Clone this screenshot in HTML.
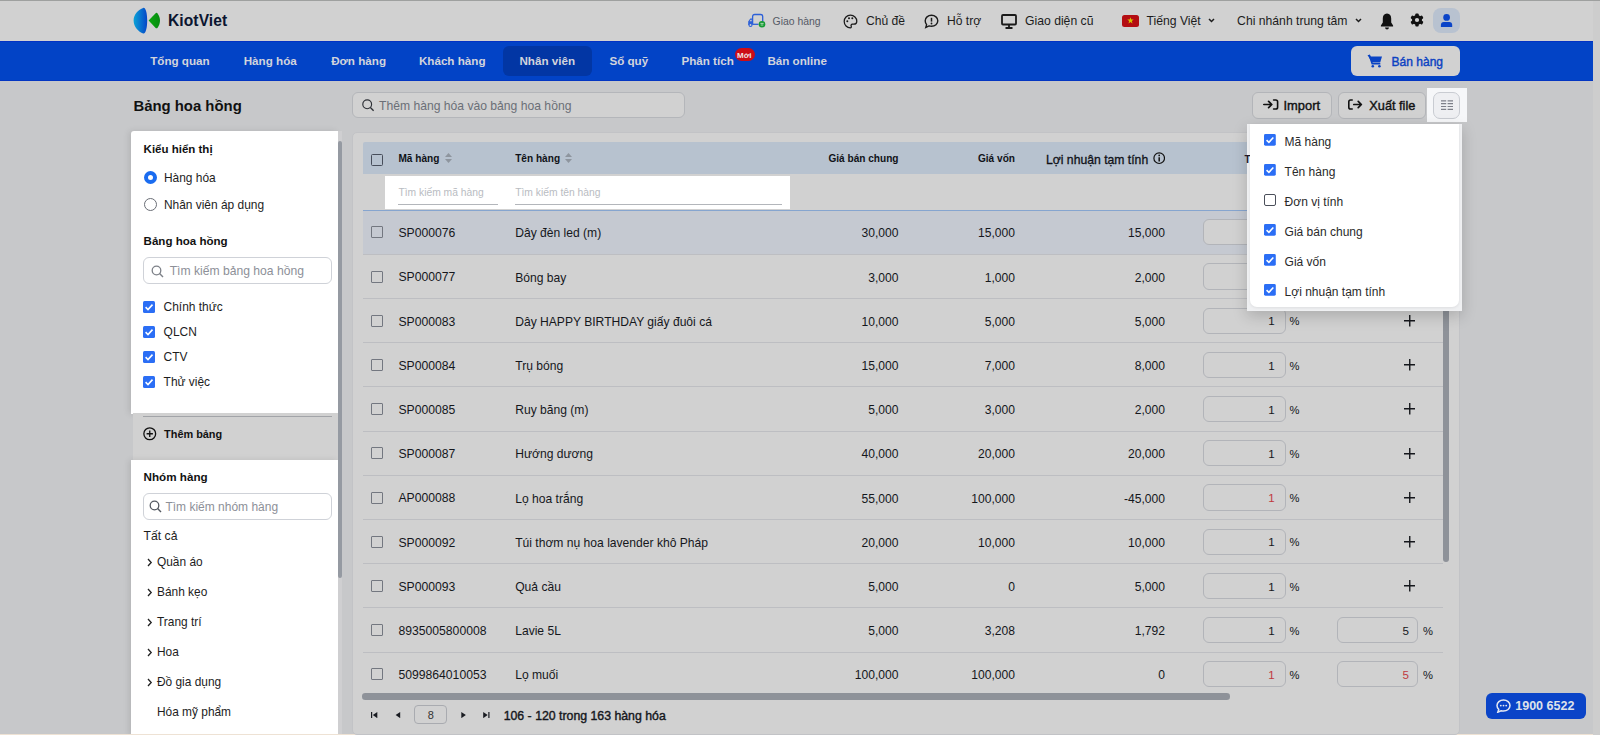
<!DOCTYPE html><html><head><meta charset="utf-8"><style>
html,body{margin:0;padding:0}
body{width:1600px;height:735px;position:relative;overflow:hidden;background:#c7c8ca;font-family:"Liberation Sans",sans-serif}
.t{position:absolute;line-height:1;white-space:nowrap}
.b{position:absolute;box-sizing:border-box}
</style></head><body>
<div class="b" style="left:0.00px;top:0.00px;width:1600.00px;height:41.00px;background:#d1d1d1"></div>
<div class="b" style="left:1593.00px;top:0.00px;width:7.00px;height:735.00px;background:#cdcdcd"></div>
<div class="b" style="left:0.00px;top:0.00px;width:1600.00px;height:1.20px;background:#9ea09f"></div>
<svg class="b" style="left:132.00px;top:7.00px;" width="30.00" height="27.00" viewBox="0 0 30 27"><defs><linearGradient id="lg1" x1="0" y1="0" x2="1" y2="0"><stop offset="0" stop-color="#0aa2d6"/><stop offset="1" stop-color="#0546c8"/></linearGradient><linearGradient id="lg2" x1="0" y1="0" x2="1" y2="0"><stop offset="0" stop-color="#0aa80e"/><stop offset="1" stop-color="#078a10"/></linearGradient></defs>
<path d="M11.2 0.9 C13.6 0.2 15.2 6 15.2 13.6 C15.2 21 13.7 27.2 11.2 26.5 C6.5 25 1.6 20 1.6 13.6 C1.6 7.2 6.5 2.2 11.2 0.9 Z" fill="url(#lg1)"/>
<path d="M16.6 13.4 L23.4 6.4 C24.1 5.6 25 5.6 25.6 6.4 C27.2 8.6 28 11 28 13.5 C28 16 27.2 18.4 25.6 20.7 C25 21.5 24.1 21.5 23.4 20.7 Z" fill="url(#lg2)"/></svg>
<div class="t" style="left:168.00px;top:12.54px;font-size:15.60px;font-weight:700;color:#0b1530;letter-spacing:0.080px;">KiotViet</div>
<svg class="b" style="left:747.00px;top:13.00px;" width="19.00" height="16.00" viewBox="0 0 19 16"><path d="M5.6 11.2 V3.6 C5.6 2.3 6.4 1.5 7.7 1.5 H13.6 C14.9 1.5 15.7 2.3 15.7 3.6 V8.5" fill="none" stroke="#2b5fd8" stroke-width="1.3"/>
<path d="M1.2 8.4 L3.3 5.6 H5.6 V11.9 H1.2 Z" fill="#2b5fd8"/><path d="M2.6 8.2 L3.7 6.8 H4.6 V8.2 Z" fill="#d1d1d1"/><path d="M5.6 11.3 H11.5" stroke="#2b5fd8" stroke-width="1.3"/>
<circle cx="3.5" cy="12" r="1.5" fill="#d1d1d1" stroke="#2b5fd8" stroke-width="1.1"/>
<circle cx="15" cy="11.2" r="3.3" fill="#159a33"/><path d="M13.4 10.4 H16.6 M13.7 12 H16.3" stroke="#cfe9d3" stroke-width="0.8"/></svg>
<div class="t" style="left:772.60px;top:17.16px;font-size:10.40px;font-weight:400;color:#555a66;">Giao hàng</div>
<svg class="b" style="left:843.00px;top:14.00px;" width="15.00" height="15.00" viewBox="0 0 15 15"><path d="M7.5 1.2 C3.8 1.2 1.2 4 1.2 7.5 C1.2 11 4 13.8 7.3 13.8 C8.3 13.8 8.6 13 8.2 12.2 C7.7 11.2 8.3 10.2 9.4 10.2 H10.8 C12.6 10.2 13.8 9 13.8 7.2 C13.8 3.8 11 1.2 7.5 1.2 Z" fill="none" stroke="#1a1a1a" stroke-width="1.25"/>
<circle cx="4.3" cy="7.3" r="1" fill="#1a1a1a"/><circle cx="6" cy="4.3" r="1" fill="#1a1a1a"/><circle cx="9.3" cy="4.3" r="1" fill="#1a1a1a"/></svg>
<div class="t" style="left:866.00px;top:15.41px;font-size:12.10px;font-weight:400;color:#1c1c1c;">Chủ đề</div>
<svg class="b" style="left:924.00px;top:14.00px;" width="15.00" height="15.00" viewBox="0 0 15 15"><path d="M7.5 1.3 C11 1.3 13.8 3.7 13.8 6.8 C13.8 9.9 11 12.3 7.5 12.3 C6.6 12.3 5.8 12.2 5 11.9 L1.8 13.4 L2.6 10.6 C1.7 9.6 1.2 8.3 1.2 6.8 C1.2 3.7 4 1.3 7.5 1.3 Z" fill="none" stroke="#1a1a1a" stroke-width="1.4"/>
<path d="M7.5 3.8 V7.6" stroke="#1a1a1a" stroke-width="1.5"/><circle cx="7.5" cy="9.5" r="0.9" fill="#1a1a1a"/></svg>
<div class="t" style="left:947.00px;top:15.41px;font-size:12.10px;font-weight:400;color:#1c1c1c;">Hỗ trợ</div>
<svg class="b" style="left:1001.00px;top:14.00px;" width="16.00" height="15.00" viewBox="0 0 16 15"><rect x="1" y="1" width="14" height="9.5" rx="1" fill="none" stroke="#1a1a1a" stroke-width="1.8"/><path d="M8 10.5 V13.5 M4.5 14 H11.5" stroke="#1a1a1a" stroke-width="1.8"/></svg>
<div class="t" style="left:1025.00px;top:15.33px;font-size:12.20px;font-weight:400;color:#1c1c1c;">Giao diện cũ</div>
<div class="b" style="left:1122.40px;top:15.40px;width:16.40px;height:11.20px;background:#b40d12;border-radius:2.5px"></div>
<svg class="b" style="left:1127.00px;top:17.20px;" width="7.00" height="7.00" viewBox="0 0 7 7"><path d="M3.5 0.3 L4.3 2.6 H6.7 L4.8 4 L5.5 6.4 L3.5 5 L1.5 6.4 L2.2 4 L0.3 2.6 H2.7 Z" fill="#d8c400"/></svg>
<div class="t" style="left:1146.50px;top:15.33px;font-size:12.20px;font-weight:400;color:#1c1c1c;">Tiếng Việt</div>
<svg class="b" style="left:1207.50px;top:18.00px;" width="7.00" height="5.00" viewBox="0 0 7 5"><path d="M1 1 L3.5 3.5 L6 1" fill="none" stroke="#1c1c1c" stroke-width="1.5"/></svg>
<div class="t" style="left:1237.10px;top:15.33px;font-size:12.20px;font-weight:400;color:#1c1c1c;">Chi nhánh trung tâm</div>
<svg class="b" style="left:1355.00px;top:18.00px;" width="7.00" height="5.00" viewBox="0 0 7 5"><path d="M1 1 L3.5 3.5 L6 1" fill="none" stroke="#1c1c1c" stroke-width="1.5"/></svg>
<svg class="b" style="left:1379.50px;top:12.50px;" width="14.00" height="17.00" viewBox="0 0 14 17"><path d="M7 0.6 C9.9 0.6 11.2 2.8 11.2 5.6 V9.5 L13.1 12.4 V13.5 H0.9 V12.4 L2.8 9.5 V5.6 C2.8 2.8 4.1 0.6 7 0.6 Z" fill="#111"/><path d="M5 14.4 H9 C8.8 15.7 8 16.4 7 16.4 C6 16.4 5.2 15.7 5 14.4 Z" fill="#111"/></svg>
<svg class="b" style="left:1409.50px;top:13.20px;" width="14.00" height="14.00" viewBox="0 0 14 14"><g transform="translate(7 7)"><circle r="5" fill="#111"/><rect x="-1.7" y="-6.6" width="3.4" height="13.2" rx="1" fill="#111"/><rect x="-1.7" y="-6.6" width="3.4" height="13.2" rx="1" fill="#111" transform="rotate(60)"/><rect x="-1.7" y="-6.6" width="3.4" height="13.2" rx="1" fill="#111" transform="rotate(120)"/><circle r="2.1" fill="#d1d1d1"/></g></svg>
<div class="b" style="left:1433.40px;top:7.70px;width:26.30px;height:25.80px;background:#b8c2d0;border-radius:8px"></div>
<svg class="b" style="left:1440.00px;top:14.00px;" width="13.00" height="14.00" viewBox="0 0 13 14"><circle cx="6.6" cy="3.4" r="3.35" fill="#0a44c8"/><path d="M0.9 13.1 V11 C0.9 9.3 2 8.1 3.8 8.1 H9.3 C11.1 8.1 12.2 9.3 12.2 11 V13.1 Z" fill="#0a44c8"/></svg>
<div class="b" style="left:0.00px;top:41.00px;width:1593.00px;height:39.50px;background:#0243c6"></div>
<div class="b" style="left:0.00px;top:41.00px;width:1593.00px;height:1.00px;background:#0232c4"></div>
<div class="b" style="left:0.00px;top:79.50px;width:1593.00px;height:1.00px;background:#0336c2"></div>
<div class="b" style="left:502.70px;top:46.00px;width:89.50px;height:29.60px;background:#0236a4;border-radius:6px"></div>
<div class="t" style="left:150.20px;top:55.00px;font-size:11.65px;font-weight:700;color:#d2d4dc;">Tổng quan</div>
<div class="t" style="left:243.70px;top:55.00px;font-size:11.65px;font-weight:700;color:#d2d4dc;">Hàng hóa</div>
<div class="t" style="left:331.20px;top:55.00px;font-size:11.65px;font-weight:700;color:#d2d4dc;">Đơn hàng</div>
<div class="t" style="left:418.90px;top:55.00px;font-size:11.65px;font-weight:700;color:#d2d4dc;">Khách hàng</div>
<div class="t" style="left:519.40px;top:55.00px;font-size:11.65px;font-weight:700;color:#d2d4dc;">Nhân viên</div>
<div class="t" style="left:609.40px;top:55.00px;font-size:11.65px;font-weight:700;color:#d2d4dc;">Sổ quỹ</div>
<div class="t" style="left:681.40px;top:55.00px;font-size:11.65px;font-weight:700;color:#d2d4dc;">Phân tích</div>
<div class="t" style="left:767.40px;top:55.00px;font-size:11.65px;font-weight:700;color:#d2d4dc;">Bán online</div>
<div class="b" style="left:734.60px;top:47.50px;width:20.40px;height:13.20px;background:#cc0c16;border-radius:7px"></div>
<div class="t" style="left:737.00px;top:51.60px;font-size:8.00px;font-weight:700;color:#f0e4e4;">Mới</div>
<div class="b" style="left:1350.90px;top:45.70px;width:109.00px;height:30.20px;background:#d1d1d1;border-radius:6px"></div>
<svg class="b" style="left:1367.30px;top:53.80px;" width="16.00" height="14.00" viewBox="0 0 16 14"><path d="M0.5 1 H2.6 L3.6 2.6 H15 L13.2 8.6 H5 Z" fill="#0a44c4"/><path d="M2.2 0.8 L5.2 9.8 H13.3" fill="none" stroke="#0a44c4" stroke-width="1.6"/><circle cx="5.8" cy="12.2" r="1.3" fill="#0a44c4"/><circle cx="12.4" cy="12.2" r="1.3" fill="#0a44c4"/></svg>
<div class="t" style="left:1391.60px;top:55.60px;font-size:12.00px;font-weight:400;color:#0c42c2;-webkit-text-stroke:0.4px #0c42c2">Bán hàng</div>
<div class="t" style="left:133.40px;top:99.03px;font-size:14.90px;font-weight:700;color:#111;">Bảng hoa hồng</div>
<div class="b" style="left:352.00px;top:92.10px;width:332.60px;height:26.40px;background:#d1d1d1;border:1px solid #b4b6ba;border-radius:6px"></div>
<svg class="b" style="left:362.00px;top:99.00px;" width="13.00" height="13.00" viewBox="0 0 13 13"><circle cx="5.2" cy="5.3" r="4.4" fill="none" stroke="#2c2f35" stroke-width="1.15"/><path d="M8.4 8.5 L11.6 11.7" stroke="#2c2f35" stroke-width="1.3"/></svg>
<div class="t" style="left:379.00px;top:100.47px;font-size:12.15px;font-weight:400;color:#6b6f77;">Thêm hàng hóa vào bảng hoa hồng</div>
<div class="b" style="left:1252.00px;top:92.10px;width:79.50px;height:26.60px;background:#d1d1d1;border:1px solid #b3b5b9;border-radius:6px"></div>
<svg class="b" style="left:1262.80px;top:99.40px;" width="16.00" height="11.00" viewBox="0 0 16 11"><path d="M0.8 5.5 H8.6 M5.6 2.4 L8.8 5.5 L5.6 8.6" fill="none" stroke="#111" stroke-width="1.7" stroke-linecap="round" stroke-linejoin="round"/><path d="M10.6 1 H12.8 C13.9 1 14.6 1.7 14.6 2.8 V8.2 C14.6 9.3 13.9 10 12.8 10 H10.6" fill="none" stroke="#111" stroke-width="1.6" stroke-linecap="round"/></svg>
<div class="t" style="left:1283.50px;top:100.03px;font-size:12.90px;font-weight:400;color:#111;-webkit-text-stroke:0.4px #111">Import</div>
<div class="b" style="left:1338.00px;top:92.10px;width:88.20px;height:26.60px;background:#d1d1d1;border:1px solid #b3b5b9;border-radius:6px"></div>
<svg class="b" style="left:1348.30px;top:99.40px;" width="16.00" height="11.00" viewBox="0 0 16 11"><path d="M4.2 1 H2.6 C1.5 1 0.8 1.7 0.8 2.8 V8.2 C0.8 9.3 1.5 10 2.6 10 H4.2" fill="none" stroke="#111" stroke-width="1.6" stroke-linecap="round"/><path d="M5.8 5.5 H13.2 M10.2 2.4 L13.4 5.5 L10.2 8.6" fill="none" stroke="#111" stroke-width="1.7" stroke-linecap="round" stroke-linejoin="round"/></svg>
<div class="t" style="left:1369.30px;top:100.16px;font-size:12.75px;font-weight:400;color:#111;-webkit-text-stroke:0.4px #111">Xuất file</div>
<div class="b" style="left:1426.80px;top:87.90px;width:40.20px;height:33.80px;background:#f6f7f9"></div>
<div class="b" style="left:1433.00px;top:92.20px;width:26.80px;height:26.50px;background:#eeeff2;border:1px solid #c9ccd2;border-radius:7px"></div>
<svg class="b" style="left:1441.00px;top:100.20px;" width="12.00" height="10.00" viewBox="0 0 12 10"><path d="M0 0.8 H5.2 M6.6 0.8 H12 M0 3.65 H5.2 M6.6 3.65 H12 M0 6.5 H5.2 M6.6 6.5 H12 M0 9.35 H5.2 M6.6 9.35 H12" stroke="#7d8089" stroke-width="1.2"/></svg>
<div class="b" style="left:130.60px;top:130.50px;width:207.50px;height:283.00px;background:#fff;border-radius:3px 0 0 0;box-shadow:-2px 0 6px rgba(0,0,0,0.10)"></div>
<div class="b" style="left:132.70px;top:413.00px;width:205.40px;height:46.50px;background:#d1d1d1"></div>
<div class="b" style="left:130.60px;top:459.50px;width:207.50px;height:276.00px;background:#fff;box-shadow:-2px 0 6px rgba(0,0,0,0.10)"></div>
<div class="b" style="left:338.10px;top:130.50px;width:3.90px;height:604.50px;background:#cfcfd1"></div>
<div class="b" style="left:338.30px;top:141.00px;width:3.50px;height:437.00px;background:#959aa2;border-radius:2px"></div>
<div class="t" style="left:143.60px;top:144.12px;font-size:11.50px;font-weight:700;color:#111;">Kiểu hiển thị</div>
<div class="b" style="left:143.60px;top:170.90px;width:13.00px;height:13.00px;background:#fff;border:4.3px solid #1a6cf0;border-radius:50%"></div>
<div class="t" style="left:163.90px;top:172.94px;font-size:11.95px;font-weight:400;color:#1d1d1d;">Hàng hóa</div>
<div class="b" style="left:143.60px;top:198.10px;width:13.20px;height:13.20px;background:#fff;border:1px solid #6a6e76;border-radius:50%"></div>
<div class="t" style="left:163.90px;top:200.34px;font-size:11.95px;font-weight:400;color:#1d1d1d;">Nhân viên áp dụng</div>
<div class="t" style="left:143.60px;top:236.38px;font-size:11.55px;font-weight:700;color:#111;">Bảng hoa hồng</div>
<div class="b" style="left:143.30px;top:257.40px;width:188.40px;height:26.60px;border:1px solid #cfd2d8;border-radius:6px;background:#fff"></div>
<svg class="b" style="left:151.20px;top:264.60px;" width="13.00" height="13.00" viewBox="0 0 13 13"><circle cx="5.5" cy="5.5" r="4.3" fill="none" stroke="#7d8188" stroke-width="1.3"/><path d="M8.6 8.6 L12 12" stroke="#7d8188" stroke-width="1.4"/></svg>
<div class="t" style="left:169.70px;top:265.27px;font-size:12.15px;font-weight:400;color:#8d9098;">Tìm kiếm bảng hoa hồng</div>
<svg class="b" style="left:143.30px;top:300.90px;" width="12.00" height="12.00" viewBox="0 0 12 12"><rect x="0" y="0" width="12" height="12" rx="1.5" fill="#2b6ef5"/><path d="M2.6 6.2 L5 8.5 L9.5 3.6" fill="none" stroke="#fff" stroke-width="1.6"/></svg>
<div class="t" style="left:163.60px;top:301.94px;font-size:11.95px;font-weight:400;color:#1d1d1d;">Chính thức</div>
<svg class="b" style="left:143.30px;top:325.90px;" width="12.00" height="12.00" viewBox="0 0 12 12"><rect x="0" y="0" width="12" height="12" rx="1.5" fill="#2b6ef5"/><path d="M2.6 6.2 L5 8.5 L9.5 3.6" fill="none" stroke="#fff" stroke-width="1.6"/></svg>
<div class="t" style="left:163.60px;top:326.94px;font-size:11.95px;font-weight:400;color:#1d1d1d;">QLCN</div>
<svg class="b" style="left:143.30px;top:350.90px;" width="12.00" height="12.00" viewBox="0 0 12 12"><rect x="0" y="0" width="12" height="12" rx="1.5" fill="#2b6ef5"/><path d="M2.6 6.2 L5 8.5 L9.5 3.6" fill="none" stroke="#fff" stroke-width="1.6"/></svg>
<div class="t" style="left:163.60px;top:351.94px;font-size:11.95px;font-weight:400;color:#1d1d1d;">CTV</div>
<svg class="b" style="left:143.30px;top:375.90px;" width="12.00" height="12.00" viewBox="0 0 12 12"><rect x="0" y="0" width="12" height="12" rx="1.5" fill="#2b6ef5"/><path d="M2.6 6.2 L5 8.5 L9.5 3.6" fill="none" stroke="#fff" stroke-width="1.6"/></svg>
<div class="t" style="left:163.60px;top:376.94px;font-size:11.95px;font-weight:400;color:#1d1d1d;">Thử việc</div>
<div class="b" style="left:143.30px;top:415.80px;width:188.40px;height:1.00px;background:#a2a4a8"></div>
<svg class="b" style="left:143.30px;top:427.20px;" width="13.50" height="13.50" viewBox="0 0 13.5 13.5"><circle cx="6.75" cy="6.75" r="5.9" fill="none" stroke="#111" stroke-width="1.3"/><path d="M6.75 3.6 V9.9 M3.6 6.75 H9.9" stroke="#111" stroke-width="1.3"/></svg>
<div class="t" style="left:164.10px;top:428.54px;font-size:10.90px;font-weight:700;color:#111;">Thêm bảng</div>
<div class="t" style="left:143.60px;top:470.80px;font-size:11.65px;font-weight:700;color:#111;">Nhóm hàng</div>
<div class="b" style="left:143.30px;top:493.30px;width:188.40px;height:26.30px;border:1px solid #cfd2d8;border-radius:6px;background:#fff"></div>
<svg class="b" style="left:148.60px;top:499.60px;" width="13.00" height="13.00" viewBox="0 0 13 13"><circle cx="5.5" cy="5.5" r="4.3" fill="none" stroke="#555a62" stroke-width="1.3"/><path d="M8.6 8.6 L12 12" stroke="#555a62" stroke-width="1.4"/></svg>
<div class="t" style="left:165.40px;top:501.40px;font-size:12.00px;font-weight:400;color:#8d9098;">Tìm kiếm nhóm hàng</div>
<div class="t" style="left:143.60px;top:530.23px;font-size:12.20px;font-weight:400;color:#1d1d1d;">Tất cả</div>
<svg class="b" style="left:147.00px;top:557.50px;" width="6.00" height="9.00" viewBox="0 0 6 9"><path d="M1 1 L4.2 4.5 L1 8" fill="none" stroke="#222" stroke-width="1.3"/></svg>
<div class="t" style="left:157.00px;top:557.18px;font-size:11.90px;font-weight:400;color:#1d1d1d;">Quần áo</div>
<svg class="b" style="left:147.00px;top:587.50px;" width="6.00" height="9.00" viewBox="0 0 6 9"><path d="M1 1 L4.2 4.5 L1 8" fill="none" stroke="#222" stroke-width="1.3"/></svg>
<div class="t" style="left:157.00px;top:587.18px;font-size:11.90px;font-weight:400;color:#1d1d1d;">Bánh kẹo</div>
<svg class="b" style="left:147.00px;top:617.50px;" width="6.00" height="9.00" viewBox="0 0 6 9"><path d="M1 1 L4.2 4.5 L1 8" fill="none" stroke="#222" stroke-width="1.3"/></svg>
<div class="t" style="left:157.00px;top:617.18px;font-size:11.90px;font-weight:400;color:#1d1d1d;">Trang trí</div>
<svg class="b" style="left:147.00px;top:647.50px;" width="6.00" height="9.00" viewBox="0 0 6 9"><path d="M1 1 L4.2 4.5 L1 8" fill="none" stroke="#222" stroke-width="1.3"/></svg>
<div class="t" style="left:157.00px;top:647.18px;font-size:11.90px;font-weight:400;color:#1d1d1d;">Hoa</div>
<svg class="b" style="left:147.00px;top:677.50px;" width="6.00" height="9.00" viewBox="0 0 6 9"><path d="M1 1 L4.2 4.5 L1 8" fill="none" stroke="#222" stroke-width="1.3"/></svg>
<div class="t" style="left:157.00px;top:677.18px;font-size:11.90px;font-weight:400;color:#1d1d1d;">Đồ gia dụng</div>
<div class="t" style="left:157.00px;top:707.18px;font-size:11.90px;font-weight:400;color:#1d1d1d;">Hóa mỹ phẩm</div>
<div class="b" style="left:0.00px;top:734.00px;width:1593.00px;height:1.00px;background:#eee2d4"></div>
<div class="b" style="left:352.30px;top:131.80px;width:1107.90px;height:603.20px;background:#d1d1d1;border:1px solid #c2c3c6;border-radius:5px"></div>
<div class="b" style="left:362.50px;top:141.70px;width:1080.50px;height:32.10px;background:#b7c2cf;border-radius:2px 2px 0 0"></div>
<div class="b" style="left:370.60px;top:153.80px;width:12.20px;height:12.20px;border:1.1px solid #474d5a;border-radius:1.5px"></div>
<div class="t" style="left:398.40px;top:154.31px;font-size:10.10px;font-weight:700;color:#101218;">Mã hàng</div>
<svg class="b" style="left:445.30px;top:152.50px;" width="7.00" height="10.00" viewBox="0 0 7 10"><path d="M3.5 0 L7 4 H0 Z M3.5 10 L7 6 H0 Z" fill="#8e959e"/></svg>
<div class="t" style="left:515.20px;top:154.31px;font-size:10.10px;font-weight:700;color:#101218;">Tên hàng</div>
<svg class="b" style="left:564.80px;top:152.50px;" width="7.00" height="10.00" viewBox="0 0 7 10"><path d="M3.5 0 L7 4 H0 Z M3.5 10 L7 6 H0 Z" fill="#8e959e"/></svg>
<div class="t" style="right:701.50px;top:154.31px;font-size:10.10px;font-weight:700;color:#101218;">Giá bán chung</div>
<div class="t" style="right:585.00px;top:154.31px;font-size:10.10px;font-weight:700;color:#101218;">Giá vốn</div>
<div class="t" style="left:1046.00px;top:153.93px;font-size:12.20px;font-weight:400;color:#101218;-webkit-text-stroke:0.3px #101218">Lợi nhuận tạm tính</div>
<svg class="b" style="left:1153.00px;top:152.30px;" width="12.40" height="12.40" viewBox="0 0 12.4 12.4"><circle cx="6.2" cy="6.2" r="5.3" fill="none" stroke="#111" stroke-width="1.2"/><path d="M6.2 5.3 V9.5" stroke="#111" stroke-width="1.5"/><circle cx="6.2" cy="3.4" r="0.85" fill="#111"/></svg>
<div class="b" style="left:384.70px;top:176.00px;width:405.10px;height:32.90px;background:#fff"></div>
<div class="b" style="left:398.40px;top:203.60px;width:99.60px;height:1.10px;background:#b3b6bb"></div>
<div class="b" style="left:515.20px;top:203.60px;width:266.40px;height:1.10px;background:#b3b6bb"></div>
<div class="t" style="left:398.40px;top:187.84px;font-size:10.30px;font-weight:400;color:#b9bcc2;">Tìm kiếm mã hàng</div>
<div class="t" style="left:515.20px;top:187.84px;font-size:10.30px;font-weight:400;color:#b9bcc2;">Tìm kiếm tên hàng</div>
<div class="b" style="left:362.50px;top:210.20px;width:1080.50px;height:44.20px;background:#c5c9d1"></div>
<div class="b" style="left:362.50px;top:209.60px;width:1080.50px;height:1.20px;background:#86a5cf"></div>
<div class="b" style="left:362.50px;top:253.80px;width:1080.50px;height:1.00px;background:#bdbec2"></div>
<div class="b" style="left:370.80px;top:226.40px;width:12.00px;height:12.00px;border:1.1px solid #737780;border-radius:1px"></div>
<div class="t" style="left:398.40px;top:227.23px;font-size:12.20px;font-weight:400;color:#15171c;">SP000076</div>
<div class="t" style="left:515.20px;top:227.31px;font-size:12.10px;font-weight:400;color:#15171c;">Dây đèn led (m)</div>
<div class="t" style="right:701.50px;top:227.31px;font-size:12.10px;font-weight:400;color:#15171c;">30,000</div>
<div class="t" style="right:585.00px;top:227.31px;font-size:12.10px;font-weight:400;color:#15171c;">15,000</div>
<div class="t" style="right:435.00px;top:227.31px;font-size:12.10px;font-weight:400;color:#15171c;">15,000</div>
<div class="b" style="left:1202.50px;top:219.10px;width:83.00px;height:26.30px;background:#d1d1d1;border:1px solid #b2b4b9;border-radius:6px"></div>
<div class="t" style="right:325.20px;top:227.04px;font-size:11.60px;font-weight:400;color:#15171c;">1</div>
<div class="t" style="left:1289.40px;top:228.08px;font-size:11.20px;font-weight:400;color:#15171c;">%</div>
<svg class="b" style="left:1403.50px;top:226.60px;" width="11.50" height="11.50" viewBox="0 0 11.5 11.5"><path d="M5.75 0 V11.5 M0 5.75 H11.5" stroke="#15171c" stroke-width="1.4"/></svg>
<div class="b" style="left:362.50px;top:298.00px;width:1080.50px;height:1.00px;background:#bdbec2"></div>
<div class="b" style="left:370.80px;top:270.60px;width:12.00px;height:12.00px;border:1.1px solid #737780;border-radius:1px"></div>
<div class="t" style="left:398.40px;top:271.43px;font-size:12.20px;font-weight:400;color:#15171c;">SP000077</div>
<div class="t" style="left:515.20px;top:271.51px;font-size:12.10px;font-weight:400;color:#15171c;">Bóng bay</div>
<div class="t" style="right:701.50px;top:271.51px;font-size:12.10px;font-weight:400;color:#15171c;">3,000</div>
<div class="t" style="right:585.00px;top:271.51px;font-size:12.10px;font-weight:400;color:#15171c;">1,000</div>
<div class="t" style="right:435.00px;top:271.51px;font-size:12.10px;font-weight:400;color:#15171c;">2,000</div>
<div class="b" style="left:1202.50px;top:263.30px;width:83.00px;height:26.30px;background:#d1d1d1;border:1px solid #b2b4b9;border-radius:6px"></div>
<div class="t" style="right:325.20px;top:271.24px;font-size:11.60px;font-weight:400;color:#15171c;">1</div>
<div class="t" style="left:1289.40px;top:272.28px;font-size:11.20px;font-weight:400;color:#15171c;">%</div>
<svg class="b" style="left:1403.50px;top:270.80px;" width="11.50" height="11.50" viewBox="0 0 11.5 11.5"><path d="M5.75 0 V11.5 M0 5.75 H11.5" stroke="#15171c" stroke-width="1.4"/></svg>
<div class="b" style="left:362.50px;top:342.20px;width:1080.50px;height:1.00px;background:#bdbec2"></div>
<div class="b" style="left:370.80px;top:314.80px;width:12.00px;height:12.00px;border:1.1px solid #737780;border-radius:1px"></div>
<div class="t" style="left:398.40px;top:315.63px;font-size:12.20px;font-weight:400;color:#15171c;">SP000083</div>
<div class="t" style="left:515.20px;top:315.72px;font-size:12.10px;font-weight:400;color:#15171c;">Dây HAPPY BIRTHDAY giấy đuôi cá</div>
<div class="t" style="right:701.50px;top:315.72px;font-size:12.10px;font-weight:400;color:#15171c;">10,000</div>
<div class="t" style="right:585.00px;top:315.72px;font-size:12.10px;font-weight:400;color:#15171c;">5,000</div>
<div class="t" style="right:435.00px;top:315.72px;font-size:12.10px;font-weight:400;color:#15171c;">5,000</div>
<div class="b" style="left:1202.50px;top:307.50px;width:83.00px;height:26.30px;background:#d1d1d1;border:1px solid #b2b4b9;border-radius:6px"></div>
<div class="t" style="right:325.20px;top:315.44px;font-size:11.60px;font-weight:400;color:#15171c;">1</div>
<div class="t" style="left:1289.40px;top:316.48px;font-size:11.20px;font-weight:400;color:#15171c;">%</div>
<svg class="b" style="left:1403.50px;top:315.00px;" width="11.50" height="11.50" viewBox="0 0 11.5 11.5"><path d="M5.75 0 V11.5 M0 5.75 H11.5" stroke="#15171c" stroke-width="1.4"/></svg>
<div class="b" style="left:362.50px;top:386.40px;width:1080.50px;height:1.00px;background:#bdbec2"></div>
<div class="b" style="left:370.80px;top:359.00px;width:12.00px;height:12.00px;border:1.1px solid #737780;border-radius:1px"></div>
<div class="t" style="left:398.40px;top:359.83px;font-size:12.20px;font-weight:400;color:#15171c;">SP000084</div>
<div class="t" style="left:515.20px;top:359.92px;font-size:12.10px;font-weight:400;color:#15171c;">Trụ bóng</div>
<div class="t" style="right:701.50px;top:359.92px;font-size:12.10px;font-weight:400;color:#15171c;">15,000</div>
<div class="t" style="right:585.00px;top:359.92px;font-size:12.10px;font-weight:400;color:#15171c;">7,000</div>
<div class="t" style="right:435.00px;top:359.92px;font-size:12.10px;font-weight:400;color:#15171c;">8,000</div>
<div class="b" style="left:1202.50px;top:351.70px;width:83.00px;height:26.30px;background:#d1d1d1;border:1px solid #b2b4b9;border-radius:6px"></div>
<div class="t" style="right:325.20px;top:359.64px;font-size:11.60px;font-weight:400;color:#15171c;">1</div>
<div class="t" style="left:1289.40px;top:360.68px;font-size:11.20px;font-weight:400;color:#15171c;">%</div>
<svg class="b" style="left:1403.50px;top:359.20px;" width="11.50" height="11.50" viewBox="0 0 11.5 11.5"><path d="M5.75 0 V11.5 M0 5.75 H11.5" stroke="#15171c" stroke-width="1.4"/></svg>
<div class="b" style="left:362.50px;top:430.60px;width:1080.50px;height:1.00px;background:#bdbec2"></div>
<div class="b" style="left:370.80px;top:403.20px;width:12.00px;height:12.00px;border:1.1px solid #737780;border-radius:1px"></div>
<div class="t" style="left:398.40px;top:404.03px;font-size:12.20px;font-weight:400;color:#15171c;">SP000085</div>
<div class="t" style="left:515.20px;top:404.12px;font-size:12.10px;font-weight:400;color:#15171c;">Ruy băng (m)</div>
<div class="t" style="right:701.50px;top:404.12px;font-size:12.10px;font-weight:400;color:#15171c;">5,000</div>
<div class="t" style="right:585.00px;top:404.12px;font-size:12.10px;font-weight:400;color:#15171c;">3,000</div>
<div class="t" style="right:435.00px;top:404.12px;font-size:12.10px;font-weight:400;color:#15171c;">2,000</div>
<div class="b" style="left:1202.50px;top:395.90px;width:83.00px;height:26.30px;background:#d1d1d1;border:1px solid #b2b4b9;border-radius:6px"></div>
<div class="t" style="right:325.20px;top:403.84px;font-size:11.60px;font-weight:400;color:#15171c;">1</div>
<div class="t" style="left:1289.40px;top:404.88px;font-size:11.20px;font-weight:400;color:#15171c;">%</div>
<svg class="b" style="left:1403.50px;top:403.40px;" width="11.50" height="11.50" viewBox="0 0 11.5 11.5"><path d="M5.75 0 V11.5 M0 5.75 H11.5" stroke="#15171c" stroke-width="1.4"/></svg>
<div class="b" style="left:362.50px;top:474.80px;width:1080.50px;height:1.00px;background:#bdbec2"></div>
<div class="b" style="left:370.80px;top:447.40px;width:12.00px;height:12.00px;border:1.1px solid #737780;border-radius:1px"></div>
<div class="t" style="left:398.40px;top:448.23px;font-size:12.20px;font-weight:400;color:#15171c;">SP000087</div>
<div class="t" style="left:515.20px;top:448.31px;font-size:12.10px;font-weight:400;color:#15171c;">Hướng dương</div>
<div class="t" style="right:701.50px;top:448.31px;font-size:12.10px;font-weight:400;color:#15171c;">40,000</div>
<div class="t" style="right:585.00px;top:448.31px;font-size:12.10px;font-weight:400;color:#15171c;">20,000</div>
<div class="t" style="right:435.00px;top:448.31px;font-size:12.10px;font-weight:400;color:#15171c;">20,000</div>
<div class="b" style="left:1202.50px;top:440.10px;width:83.00px;height:26.30px;background:#d1d1d1;border:1px solid #b2b4b9;border-radius:6px"></div>
<div class="t" style="right:325.20px;top:448.04px;font-size:11.60px;font-weight:400;color:#15171c;">1</div>
<div class="t" style="left:1289.40px;top:449.08px;font-size:11.20px;font-weight:400;color:#15171c;">%</div>
<svg class="b" style="left:1403.50px;top:447.60px;" width="11.50" height="11.50" viewBox="0 0 11.5 11.5"><path d="M5.75 0 V11.5 M0 5.75 H11.5" stroke="#15171c" stroke-width="1.4"/></svg>
<div class="b" style="left:362.50px;top:519.00px;width:1080.50px;height:1.00px;background:#bdbec2"></div>
<div class="b" style="left:370.80px;top:491.60px;width:12.00px;height:12.00px;border:1.1px solid #737780;border-radius:1px"></div>
<div class="t" style="left:398.40px;top:492.43px;font-size:12.20px;font-weight:400;color:#15171c;">AP000088</div>
<div class="t" style="left:515.20px;top:492.52px;font-size:12.10px;font-weight:400;color:#15171c;">Lọ hoa trắng</div>
<div class="t" style="right:701.50px;top:492.52px;font-size:12.10px;font-weight:400;color:#15171c;">55,000</div>
<div class="t" style="right:585.00px;top:492.52px;font-size:12.10px;font-weight:400;color:#15171c;">100,000</div>
<div class="t" style="right:435.00px;top:492.52px;font-size:12.10px;font-weight:400;color:#15171c;">-45,000</div>
<div class="b" style="left:1202.50px;top:484.30px;width:83.00px;height:26.30px;background:#d1d1d1;border:1px solid #b2b4b9;border-radius:6px"></div>
<div class="t" style="right:325.20px;top:492.24px;font-size:11.60px;font-weight:400;color:#c0393e;">1</div>
<div class="t" style="left:1289.40px;top:493.28px;font-size:11.20px;font-weight:400;color:#15171c;">%</div>
<svg class="b" style="left:1403.50px;top:491.80px;" width="11.50" height="11.50" viewBox="0 0 11.5 11.5"><path d="M5.75 0 V11.5 M0 5.75 H11.5" stroke="#15171c" stroke-width="1.4"/></svg>
<div class="b" style="left:362.50px;top:563.20px;width:1080.50px;height:1.00px;background:#bdbec2"></div>
<div class="b" style="left:370.80px;top:535.80px;width:12.00px;height:12.00px;border:1.1px solid #737780;border-radius:1px"></div>
<div class="t" style="left:398.40px;top:536.63px;font-size:12.20px;font-weight:400;color:#15171c;">SP000092</div>
<div class="t" style="left:515.20px;top:536.72px;font-size:12.10px;font-weight:400;color:#15171c;">Túi thơm nụ hoa lavender khô Pháp</div>
<div class="t" style="right:701.50px;top:536.72px;font-size:12.10px;font-weight:400;color:#15171c;">20,000</div>
<div class="t" style="right:585.00px;top:536.72px;font-size:12.10px;font-weight:400;color:#15171c;">10,000</div>
<div class="t" style="right:435.00px;top:536.72px;font-size:12.10px;font-weight:400;color:#15171c;">10,000</div>
<div class="b" style="left:1202.50px;top:528.50px;width:83.00px;height:26.30px;background:#d1d1d1;border:1px solid #b2b4b9;border-radius:6px"></div>
<div class="t" style="right:325.20px;top:536.44px;font-size:11.60px;font-weight:400;color:#15171c;">1</div>
<div class="t" style="left:1289.40px;top:537.48px;font-size:11.20px;font-weight:400;color:#15171c;">%</div>
<svg class="b" style="left:1403.50px;top:536.00px;" width="11.50" height="11.50" viewBox="0 0 11.5 11.5"><path d="M5.75 0 V11.5 M0 5.75 H11.5" stroke="#15171c" stroke-width="1.4"/></svg>
<div class="b" style="left:362.50px;top:607.40px;width:1080.50px;height:1.00px;background:#bdbec2"></div>
<div class="b" style="left:370.80px;top:580.00px;width:12.00px;height:12.00px;border:1.1px solid #737780;border-radius:1px"></div>
<div class="t" style="left:398.40px;top:580.83px;font-size:12.20px;font-weight:400;color:#15171c;">SP000093</div>
<div class="t" style="left:515.20px;top:580.91px;font-size:12.10px;font-weight:400;color:#15171c;">Quả cầu</div>
<div class="t" style="right:701.50px;top:580.91px;font-size:12.10px;font-weight:400;color:#15171c;">5,000</div>
<div class="t" style="right:585.00px;top:580.91px;font-size:12.10px;font-weight:400;color:#15171c;">0</div>
<div class="t" style="right:435.00px;top:580.91px;font-size:12.10px;font-weight:400;color:#15171c;">5,000</div>
<div class="b" style="left:1202.50px;top:572.70px;width:83.00px;height:26.30px;background:#d1d1d1;border:1px solid #b2b4b9;border-radius:6px"></div>
<div class="t" style="right:325.20px;top:580.64px;font-size:11.60px;font-weight:400;color:#15171c;">1</div>
<div class="t" style="left:1289.40px;top:581.68px;font-size:11.20px;font-weight:400;color:#15171c;">%</div>
<svg class="b" style="left:1403.50px;top:580.20px;" width="11.50" height="11.50" viewBox="0 0 11.5 11.5"><path d="M5.75 0 V11.5 M0 5.75 H11.5" stroke="#15171c" stroke-width="1.4"/></svg>
<div class="b" style="left:362.50px;top:651.60px;width:1080.50px;height:1.00px;background:#bdbec2"></div>
<div class="b" style="left:370.80px;top:624.20px;width:12.00px;height:12.00px;border:1.1px solid #737780;border-radius:1px"></div>
<div class="t" style="left:398.40px;top:625.03px;font-size:12.20px;font-weight:400;color:#15171c;">8935005800008</div>
<div class="t" style="left:515.20px;top:625.12px;font-size:12.10px;font-weight:400;color:#15171c;">Lavie 5L</div>
<div class="t" style="right:701.50px;top:625.12px;font-size:12.10px;font-weight:400;color:#15171c;">5,000</div>
<div class="t" style="right:585.00px;top:625.12px;font-size:12.10px;font-weight:400;color:#15171c;">3,208</div>
<div class="t" style="right:435.00px;top:625.12px;font-size:12.10px;font-weight:400;color:#15171c;">1,792</div>
<div class="b" style="left:1202.50px;top:616.90px;width:83.00px;height:26.30px;background:#d1d1d1;border:1px solid #b2b4b9;border-radius:6px"></div>
<div class="t" style="right:325.20px;top:624.84px;font-size:11.60px;font-weight:400;color:#15171c;">1</div>
<div class="t" style="left:1289.40px;top:625.88px;font-size:11.20px;font-weight:400;color:#15171c;">%</div>
<div class="b" style="left:1336.50px;top:616.90px;width:81.80px;height:26.30px;background:#d1d1d1;border:1px solid #b2b4b9;border-radius:6px"></div>
<div class="t" style="right:191.00px;top:624.84px;font-size:11.60px;font-weight:400;color:#15171c;">5</div>
<div class="t" style="left:1423.00px;top:625.88px;font-size:11.20px;font-weight:400;color:#15171c;">%</div>
<div class="b" style="left:370.80px;top:668.40px;width:12.00px;height:12.00px;border:1.1px solid #737780;border-radius:1px"></div>
<div class="t" style="left:398.40px;top:669.23px;font-size:12.20px;font-weight:400;color:#15171c;">5099864010053</div>
<div class="t" style="left:515.20px;top:669.32px;font-size:12.10px;font-weight:400;color:#15171c;">Lọ muối</div>
<div class="t" style="right:701.50px;top:669.32px;font-size:12.10px;font-weight:400;color:#15171c;">100,000</div>
<div class="t" style="right:585.00px;top:669.32px;font-size:12.10px;font-weight:400;color:#15171c;">100,000</div>
<div class="t" style="right:435.00px;top:669.32px;font-size:12.10px;font-weight:400;color:#15171c;">0</div>
<div class="b" style="left:1202.50px;top:661.10px;width:83.00px;height:26.30px;background:#d1d1d1;border:1px solid #b2b4b9;border-radius:6px"></div>
<div class="t" style="right:325.20px;top:669.04px;font-size:11.60px;font-weight:400;color:#c0393e;">1</div>
<div class="t" style="left:1289.40px;top:670.08px;font-size:11.20px;font-weight:400;color:#15171c;">%</div>
<div class="b" style="left:1336.50px;top:661.10px;width:81.80px;height:26.30px;background:#d1d1d1;border:1px solid #b2b4b9;border-radius:6px"></div>
<div class="t" style="right:191.00px;top:669.04px;font-size:11.60px;font-weight:400;color:#c0393e;">5</div>
<div class="t" style="left:1423.00px;top:670.08px;font-size:11.20px;font-weight:400;color:#15171c;">%</div>
<div class="b" style="left:1442.80px;top:142.00px;width:6.40px;height:420.00px;background:#8e9299;border-radius:0 0 3px 3px"></div>
<div class="b" style="left:362.40px;top:693.30px;width:867.60px;height:6.60px;background:#8e9299;border-radius:3.3px"></div>
<svg class="b" style="left:371.00px;top:711.80px;" width="6.50" height="6.20" viewBox="0 0 6.5 6.2"><path d="M0.6 0 V6.2" stroke="#1a1c22" stroke-width="1.2"/><path d="M6.3 0 L1.8 3.1 L6.3 6.2 Z" fill="#1a1c22"/></svg>
<svg class="b" style="left:395.20px;top:711.80px;" width="5.50" height="6.20" viewBox="0 0 5.5 6.2"><path d="M5.2 0 L0.6 3.1 L5.2 6.2 Z" fill="#1a1c22"/></svg>
<div class="b" style="left:414.40px;top:705.20px;width:33.00px;height:19.00px;border:1px solid #a9abb0;border-radius:4px"></div>
<div class="t" style="left:430.90px;top:710.35px;font-size:11.00px;font-weight:400;color:#333;transform:translateX(-50%)">8</div>
<svg class="b" style="left:461.40px;top:711.80px;" width="5.50" height="6.20" viewBox="0 0 5.5 6.2"><path d="M0.3 0 L4.9 3.1 L0.3 6.2 Z" fill="#1a1c22"/></svg>
<svg class="b" style="left:483.00px;top:711.80px;" width="6.50" height="6.20" viewBox="0 0 6.5 6.2"><path d="M0.2 0 L4.7 3.1 L0.2 6.2 Z" fill="#1a1c22"/><path d="M5.9 0 V6.2" stroke="#1a1c22" stroke-width="1.2"/></svg>
<div class="t" style="left:503.70px;top:709.54px;font-size:12.30px;font-weight:400;color:#15171c;-webkit-text-stroke:0.4px #15171c">106 - 120 trong 163 hàng hóa</div>
<div class="b" style="left:1246.90px;top:124.30px;width:215.60px;height:186.90px;background:#eff0f2;box-shadow:0 5px 14px rgba(0,0,0,0.18)"></div>
<div class="t" style="left:1244.60px;top:155.30px;font-size:10.00px;font-weight:700;color:#201828;">T</div>
<div class="b" style="left:1250.00px;top:124.30px;width:209.30px;height:182.80px;background:#fff;border-radius:0 0 7px 7px;box-shadow:0 1px 3px rgba(0,0,0,0.08)"></div>
<svg class="b" style="left:1264.10px;top:134.00px;" width="11.80" height="11.80" viewBox="0 0 12 12"><rect x="0" y="0" width="12" height="12" rx="1.5" fill="#2b6ef5"/><path d="M2.6 6.2 L5 8.5 L9.5 3.6" fill="none" stroke="#fff" stroke-width="1.6"/></svg>
<div class="t" style="left:1284.60px;top:136.40px;font-size:12.00px;font-weight:400;color:#2a2a2a;">Mã hàng</div>
<svg class="b" style="left:1264.10px;top:164.00px;" width="11.80" height="11.80" viewBox="0 0 12 12"><rect x="0" y="0" width="12" height="12" rx="1.5" fill="#2b6ef5"/><path d="M2.6 6.2 L5 8.5 L9.5 3.6" fill="none" stroke="#fff" stroke-width="1.6"/></svg>
<div class="t" style="left:1284.60px;top:166.40px;font-size:12.00px;font-weight:400;color:#2a2a2a;">Tên hàng</div>
<div class="b" style="left:1264.10px;top:194.00px;width:11.80px;height:11.80px;border:1.1px solid #4a4f5a;border-radius:2px;background:#fff"></div>
<div class="t" style="left:1284.60px;top:196.40px;font-size:12.00px;font-weight:400;color:#2a2a2a;">Đơn vị tính</div>
<svg class="b" style="left:1264.10px;top:224.00px;" width="11.80" height="11.80" viewBox="0 0 12 12"><rect x="0" y="0" width="12" height="12" rx="1.5" fill="#2b6ef5"/><path d="M2.6 6.2 L5 8.5 L9.5 3.6" fill="none" stroke="#fff" stroke-width="1.6"/></svg>
<div class="t" style="left:1284.60px;top:226.40px;font-size:12.00px;font-weight:400;color:#2a2a2a;">Giá bán chung</div>
<svg class="b" style="left:1264.10px;top:254.00px;" width="11.80" height="11.80" viewBox="0 0 12 12"><rect x="0" y="0" width="12" height="12" rx="1.5" fill="#2b6ef5"/><path d="M2.6 6.2 L5 8.5 L9.5 3.6" fill="none" stroke="#fff" stroke-width="1.6"/></svg>
<div class="t" style="left:1284.60px;top:256.40px;font-size:12.00px;font-weight:400;color:#2a2a2a;">Giá vốn</div>
<svg class="b" style="left:1264.10px;top:284.00px;" width="11.80" height="11.80" viewBox="0 0 12 12"><rect x="0" y="0" width="12" height="12" rx="1.5" fill="#2b6ef5"/><path d="M2.6 6.2 L5 8.5 L9.5 3.6" fill="none" stroke="#fff" stroke-width="1.6"/></svg>
<div class="t" style="left:1284.60px;top:286.40px;font-size:12.00px;font-weight:400;color:#2a2a2a;">Lợi nhuận tạm tính</div>
<div class="b" style="left:1486.00px;top:692.80px;width:99.60px;height:26.00px;background:#0a44c8;border-radius:6px"></div>
<svg class="b" style="left:1496.00px;top:698.80px;" width="15.00" height="14.00" viewBox="0 0 15 14"><path d="M7.5 1 C11.2 1 14 3.5 14 6.6 C14 9.7 11.2 12.1 7.5 12.1 C6.6 12.1 5.8 12 5 11.7 L1.8 13.2 L2.7 10.4 C1.6 9.4 1 8.1 1 6.6 C1 3.5 3.8 1 7.5 1 Z" fill="none" stroke="#e6e9f2" stroke-width="1.5"/><circle cx="4.8" cy="6.6" r="0.9" fill="#e6e9f2"/><circle cx="7.5" cy="6.6" r="0.9" fill="#e6e9f2"/><circle cx="10.2" cy="6.6" r="0.9" fill="#e6e9f2"/></svg>
<div class="t" style="left:1515.20px;top:700.13px;font-size:12.55px;font-weight:700;color:#dde1ea;">1900 6522</div>
</body></html>
